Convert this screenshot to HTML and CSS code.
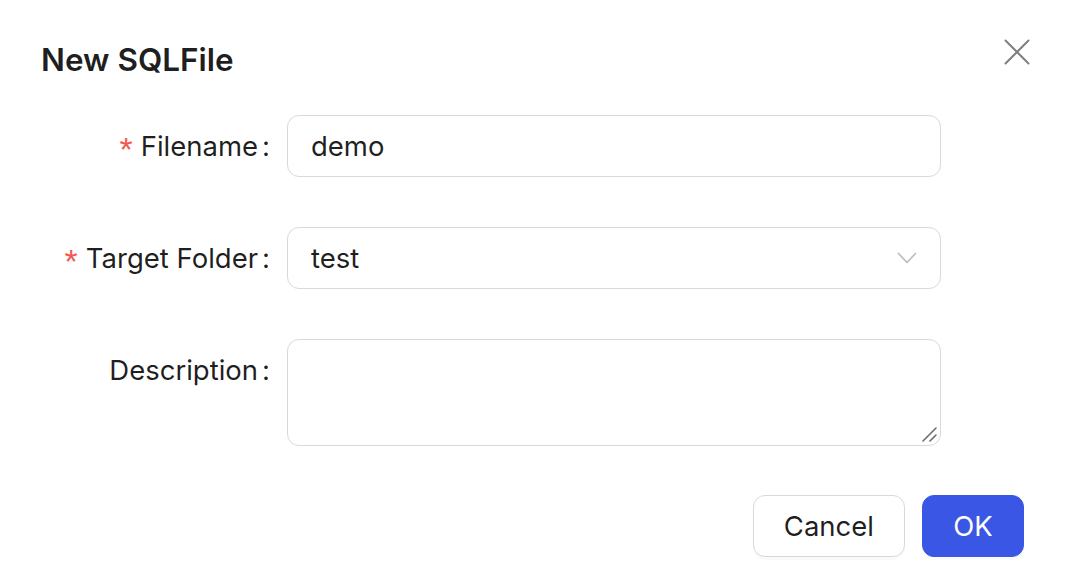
FILE: index.html
```html
<!DOCTYPE html>
<html>
<head>
<meta charset="utf-8">
<link rel="stylesheet" href="styles.css">
</head>
<body>
<div class="modal">
  <div class="header">
    <div class="title">New SQLFile</div>
    <button class="close" aria-label="Close">
      <svg width="28" height="28" viewBox="0 0 28 28"><path d="M2.5 2.5 L25.5 25.5 M25.5 2.5 L2.5 25.5" stroke="#808080" stroke-width="2" stroke-linecap="round" fill="none"/></svg>
    </button>
  </div>
  <div class="form">
    <div class="row">
      <label class="label"><span class="req">*</span>Filename<span class="colon">:</span></label>
      <div class="control"><input class="input" value="demo"></div>
    </div>
    <div class="row">
      <label class="label"><span class="req">*</span>Target Folder<span class="colon">:</span></label>
      <div class="control">
        <div class="select"><span>test</span>
          <svg class="chev" width="20" height="12" viewBox="0 0 20 12"><path d="M1.5 1.5 L10 10.5 L18.5 1.5" stroke="#bdbdbd" stroke-width="1.7" fill="none" stroke-linecap="round" stroke-linejoin="round"/></svg>
        </div>
      </div>
    </div>
    <div class="row top">
      <label class="label">Description<span class="colon">:</span></label>
      <div class="control ta-wrap">
        <textarea class="textarea"></textarea>
        <svg class="grip" width="16" height="16" viewBox="0 0 16 16"><path d="M2 15 L15 2 M9 15 L15 9" stroke="#6e6e6e" stroke-width="1.6" stroke-linecap="round" fill="none"/></svg>
      </div>
    </div>
  </div>
  <div class="footer">
    <button class="btn">Cancel</button>
    <button class="btn primary">OK</button>
  </div>
</div>
</body>
</html>
```
FILE: styles.css
```css
* { box-sizing: border-box; }
html, body { margin: 0; padding: 0; background: #fff; }
body {
  font-family: Inter, "Noto Sans", "Liberation Sans", sans-serif;
  color: rgba(0,0,0,0.88);
  width: 1066px;
  height: 586px;
  overflow: hidden;
}
.modal { padding: 0 42px 0 41px; }
.header {
  display: flex;
  justify-content: space-between;
  align-items: flex-start;
  padding-top: 40px;
  height: 115px;
}
.title {
  font-size: 31.5px;
  font-weight: 600;
  line-height: 40px;
  color: rgba(0,0,0,0.88);
}
.close {
  border: 0;
  background: none;
  padding: 0;
  margin: -4px -9px 0 0;
  width: 32px;
  height: 32px;
  display: flex;
  align-items: center;
  justify-content: center;
}
.form { display: flex; flex-direction: column; gap: 50px; }
.row {
  display: grid;
  grid-template-columns: 229px 654px;
  column-gap: 17px;
  align-items: center;
}
.row.top { align-items: start; }
.label {
  text-align: right;
  font-size: 27.5px;
  line-height: 62px;
  height: 62px;
  white-space: nowrap;
}
.req {
  color: #f5574f;
  margin-right: 8px;
  font-size: 34px;
  line-height: 1;
  font-family: "Liberation Sans", sans-serif;
  font-weight: 300;
  vertical-align: -5px;
}
.colon { margin-left: 4px; }
.input, .select, .textarea {
  width: 654px;
  border: 1.5px solid #d9d9d9;
  border-radius: 12px;
  font-family: inherit;
  font-size: 27.5px;
  color: rgba(0,0,0,0.88);
  background: #fff;
}
.input { height: 62px; padding: 0 23px; outline: none; }
.select {
  height: 62px;
  padding: 0 23px;
  display: flex;
  align-items: center;
  justify-content: space-between;
}
.ta-wrap { position: relative; width: 654px; height: 107px; }
.textarea { height: 107px; display: block; resize: none; outline: none; padding: 10px 23px; }
.grip { position: absolute; right: 4px; bottom: 4px; }
.footer {
  display: flex;
  justify-content: flex-end;
  gap: 17px;
  margin-top: 49px;
}
.btn {
  height: 62px;
  border-radius: 12px;
  border: 1.5px solid #d9d9d9;
  background: #fff;
  font-family: inherit;
  font-size: 27.5px;
  color: rgba(0,0,0,0.88);
  padding: 0 30px;
  box-shadow: 0 3px 0 rgba(0,0,0,0.02);
}
.btn.primary {
  background: #3a56e4;
  border-color: #3a56e4;
  color: #fff;
  min-width: 102px;
}
```
